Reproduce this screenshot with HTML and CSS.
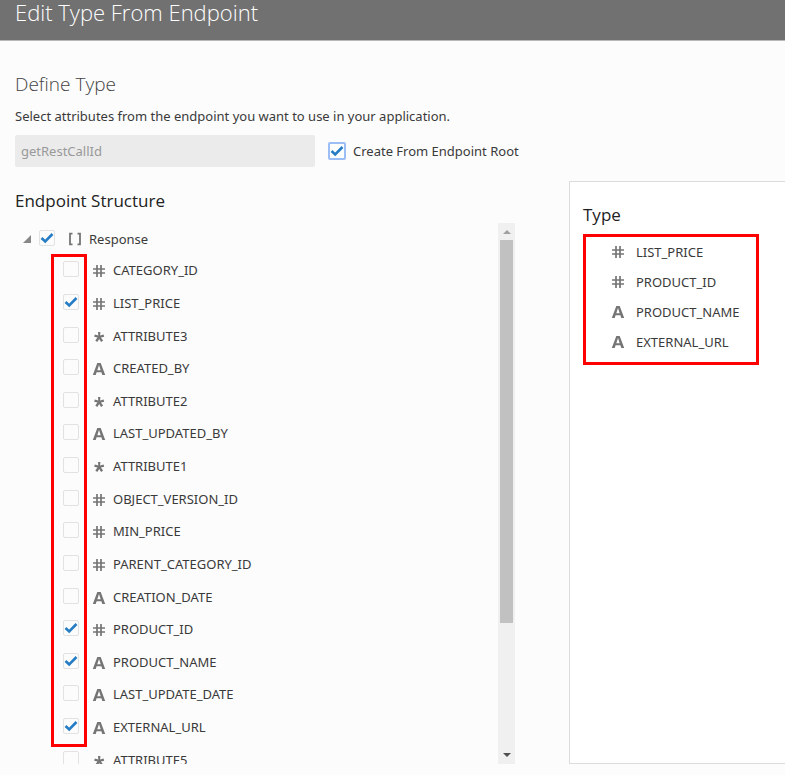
FILE: index.html
```html
<!DOCTYPE html>
<html lang="en">
<head>
<meta charset="utf-8">
<title>Edit Type From Endpoint</title>
<link rel="stylesheet" href="styles.css">
</head>
<body>
<svg class="sprite" aria-hidden="true">
  <symbol id="number" viewBox="0 0 14 14"><path d="M5 1v12M9 1v12M1 5h12M1 9h12" fill="none" stroke="currentColor" stroke-width="1.700"/></symbol>
  <symbol id="string" viewBox="0 0 14 14"><path d="M.8 13 5.300 1h3.400L13.200 13h-2.900l-.9-2.700H4.600L3.700 13zM5.300 8.200h3.400L7 3z" fill="currentColor" fill-rule="evenodd"/></symbol>
  <symbol id="any" viewBox="0 0 14 14"><path d="M6 2h2.400l-.3 3.500 3.500-1 .6 2.200-3.300.7 2.200 3.200-2 1.400L7.200 9l-1.900 3-2-1.400 2.200-3.200-3.300-.7.600-2.200 3.500 1z" fill="currentColor"/></symbol>
  <symbol id="array" viewBox="0 0 14 14"><path d="M4.500 1.700H2v10.600h2.500M9.500 1.700H12v10.600H9.500" fill="none" stroke="currentColor" stroke-width="1.800"/></symbol>
</svg>
<header class="titlebar"><h1>Edit Type From Endpoint</h1></header>
<main class="page">
  <h2 class="section-title">Define Type</h2>
  <p class="hint">Select attributes from the endpoint you want to use in your application.</p>
  <div class="controls">
    <input class="name" type="text" value="getRestCallId" aria-label="Type name" disabled>
    <label class="root-option"><input class="check focused" type="checkbox" checked>Create From Endpoint Root</label>
  </div>
  <div class="workspace">
    <section class="structure">
      <h3>Endpoint Structure</h3>
      <div class="viewport">
        <div class="tree">
          <label class="root"><svg class="twisty" viewBox="0 0 8 8"><path d="M8 0v8H0z"/></svg><input class="check" type="checkbox" checked><svg class="icon"><use href="#array"/></svg>Response</label>
          <div class="attributes">
            <label><input class="check" type="checkbox"><svg class="icon"><use href="#number"/></svg>CATEGORY_ID</label>
            <label><input class="check" type="checkbox" checked><svg class="icon"><use href="#number"/></svg>LIST_PRICE</label>
            <label><input class="check" type="checkbox"><svg class="icon"><use href="#any"/></svg>ATTRIBUTE3</label>
            <label><input class="check" type="checkbox"><svg class="icon"><use href="#string"/></svg>CREATED_BY</label>
            <label><input class="check" type="checkbox"><svg class="icon"><use href="#any"/></svg>ATTRIBUTE2</label>
            <label><input class="check" type="checkbox"><svg class="icon"><use href="#string"/></svg>LAST_UPDATED_BY</label>
            <label><input class="check" type="checkbox"><svg class="icon"><use href="#any"/></svg>ATTRIBUTE1</label>
            <label><input class="check" type="checkbox"><svg class="icon"><use href="#number"/></svg>OBJECT_VERSION_ID</label>
            <label><input class="check" type="checkbox"><svg class="icon"><use href="#number"/></svg>MIN_PRICE</label>
            <label><input class="check" type="checkbox"><svg class="icon"><use href="#number"/></svg>PARENT_CATEGORY_ID</label>
            <label><input class="check" type="checkbox"><svg class="icon"><use href="#string"/></svg>CREATION_DATE</label>
            <label><input class="check" type="checkbox" checked><svg class="icon"><use href="#number"/></svg>PRODUCT_ID</label>
            <label><input class="check" type="checkbox" checked><svg class="icon"><use href="#string"/></svg>PRODUCT_NAME</label>
            <label><input class="check" type="checkbox"><svg class="icon"><use href="#string"/></svg>LAST_UPDATE_DATE</label>
            <label><input class="check" type="checkbox" checked><svg class="icon"><use href="#string"/></svg>EXTERNAL_URL</label>
            <label><input class="check" type="checkbox"><svg class="icon"><use href="#any"/></svg>ATTRIBUTE5</label>
            <div class="highlight"></div>
          </div>
        </div>
        <div class="scrollbar" aria-hidden="true">
          <svg class="arrow up" viewBox="0 0 8 4"><path d="M0 4 4 0l4 4z"/></svg>
          <div class="track"><div class="thumb"></div></div>
          <svg class="arrow" viewBox="0 0 8 4"><path d="M0 0h8L4 4z"/></svg>
        </div>
      </div>
    </section>
    <section class="type">
      <h3>Type</h3>
      <ul class="selected">
        <li><svg class="icon"><use href="#number"/></svg>LIST_PRICE</li>
        <li><svg class="icon"><use href="#number"/></svg>PRODUCT_ID</li>
        <li><svg class="icon"><use href="#string"/></svg>PRODUCT_NAME</li>
        <li><svg class="icon"><use href="#string"/></svg>EXTERNAL_URL</li>
      </ul>
    </section>
  </div>
</main>
</body>
</html>
```
FILE: styles.css
```css
* { box-sizing: border-box; }
body {
  margin: 0;
  height: 100vh;
  display: flex;
  flex-direction: column;
  background: #fcfcfc;
  color: #3a3a3a;
  font: 13px/20px "Noto Sans", "Open Sans", sans-serif;
  overflow: hidden;
}
h1, h2, h3, p, ul { margin: 0; padding: 0; }
h1, h2, h3 { font-family: "Open Sans", "Noto Sans", sans-serif; }
.sprite { position: absolute; width: 0; height: 0; }
.titlebar {
  padding: 0 15px 16px;
  background: #717171;
  border-bottom: 1px solid #b8b8b8;
  color: #fff;
}
h1 { font-size: 22px; line-height: 24px; font-weight: 300; }
.page {
  flex: 1;
  min-height: 0;
  display: flex;
  flex-direction: column;
  padding: 30px 0 11px 15px;
}
.section-title { font-size: 19px; line-height: 26px; font-weight: 300; color: #444; }
.hint { margin-top: 9px; }
.controls { display: flex; gap: 13px; margin-top: 9px; }
.name {
  width: 300px;
  height: 32px;
  padding: 0 6px;
  border: 0;
  border-radius: 2px;
  background: #ebebeb;
  color: #999;
  font: inherit;
}
label { display: flex; align-items: center; }
.root-option { gap: 7px; }
.check {
  appearance: none;
  flex: none;
  width: 16px;
  height: 16px;
  margin: 0;
  border: 1px solid #e2e2e2;
  border-radius: 2px;
  background: #fcfcfc;
}
.check:checked {
  background: url("data:image/svg+xml,%3Csvg xmlns='http://www.w3.org/2000/svg' viewBox='0 0 14 14'%3E%3Cpath d='M1.500 7l3.700 3.500L12.500 3' fill='none' stroke='%23267dc4' stroke-width='2.600'/%3E%3C/svg%3E") center / 14px 14px no-repeat;
}
.check.focused { width: 18px; height: 18px; border: 2px solid #9dbdf5; background-color: #fff; }
.workspace {
  flex: 1;
  min-height: 0;
  display: grid;
  grid-template-columns: 500px 1fr;
  grid-template-rows: minmax(0, 1fr);
  column-gap: 54px;
  margin-top: 14px;
}
.structure { display: flex; flex-direction: column; min-height: 0; padding-top: 7px; }
h3 { font-size: 17px; line-height: 26px; font-weight: 400; color: #222; }
.viewport { flex: 1; min-height: 0; display: flex; margin-top: 9px; }
.tree { flex: 1; overflow: hidden; }
.tree .check { margin-bottom: 2px; }
.root { height: 31px; padding-left: 8px; }
.twisty { width: 8px; height: 8px; margin-right: 8px; fill: #888; }
.icon { flex: none; width: 14px; height: 14px; color: #757575; }
.root .icon { margin: 0 7px 0 13px; }
.attributes {
  position: relative;
  display: grid;
  grid-template-rows: repeat(16, 1fr);
  height: 522px;
  padding-left: 48px;
}
.attributes .icon { margin: 2px 7px 0 13px; }
.highlight {
  position: absolute;
  top: 0;
  left: 36px;
  width: 36px;
  height: 493px;
  border: 3px solid #f00;
  pointer-events: none;
}
.scrollbar {
  width: 17px;
  display: flex;
  flex-direction: column;
  align-items: center;
  padding: 7px 0;
  background: #f0f0f0;
}
.arrow { flex: none; width: 8px; height: 4px; fill: #505050; }
.arrow.up { fill: #a0a0a0; }
.track { flex: 1; width: 13px; margin: 6px 0 2px; }
.thumb { height: 75%; background: #c1c1c1; }
.type {
  padding: 20px 0 0 13px;
  background: #fff;
  border: 1px solid #dcdcdc;
  border-right: 0;
}
.selected {
  width: 176px;
  margin-top: 6px;
  padding: 0 0 5px 25px;
  border: 3px solid #f00;
  list-style: none;
}
.selected li { display: flex; align-items: center; height: 30px; }
.selected .icon { margin: 0 11px 0 0; }
```
